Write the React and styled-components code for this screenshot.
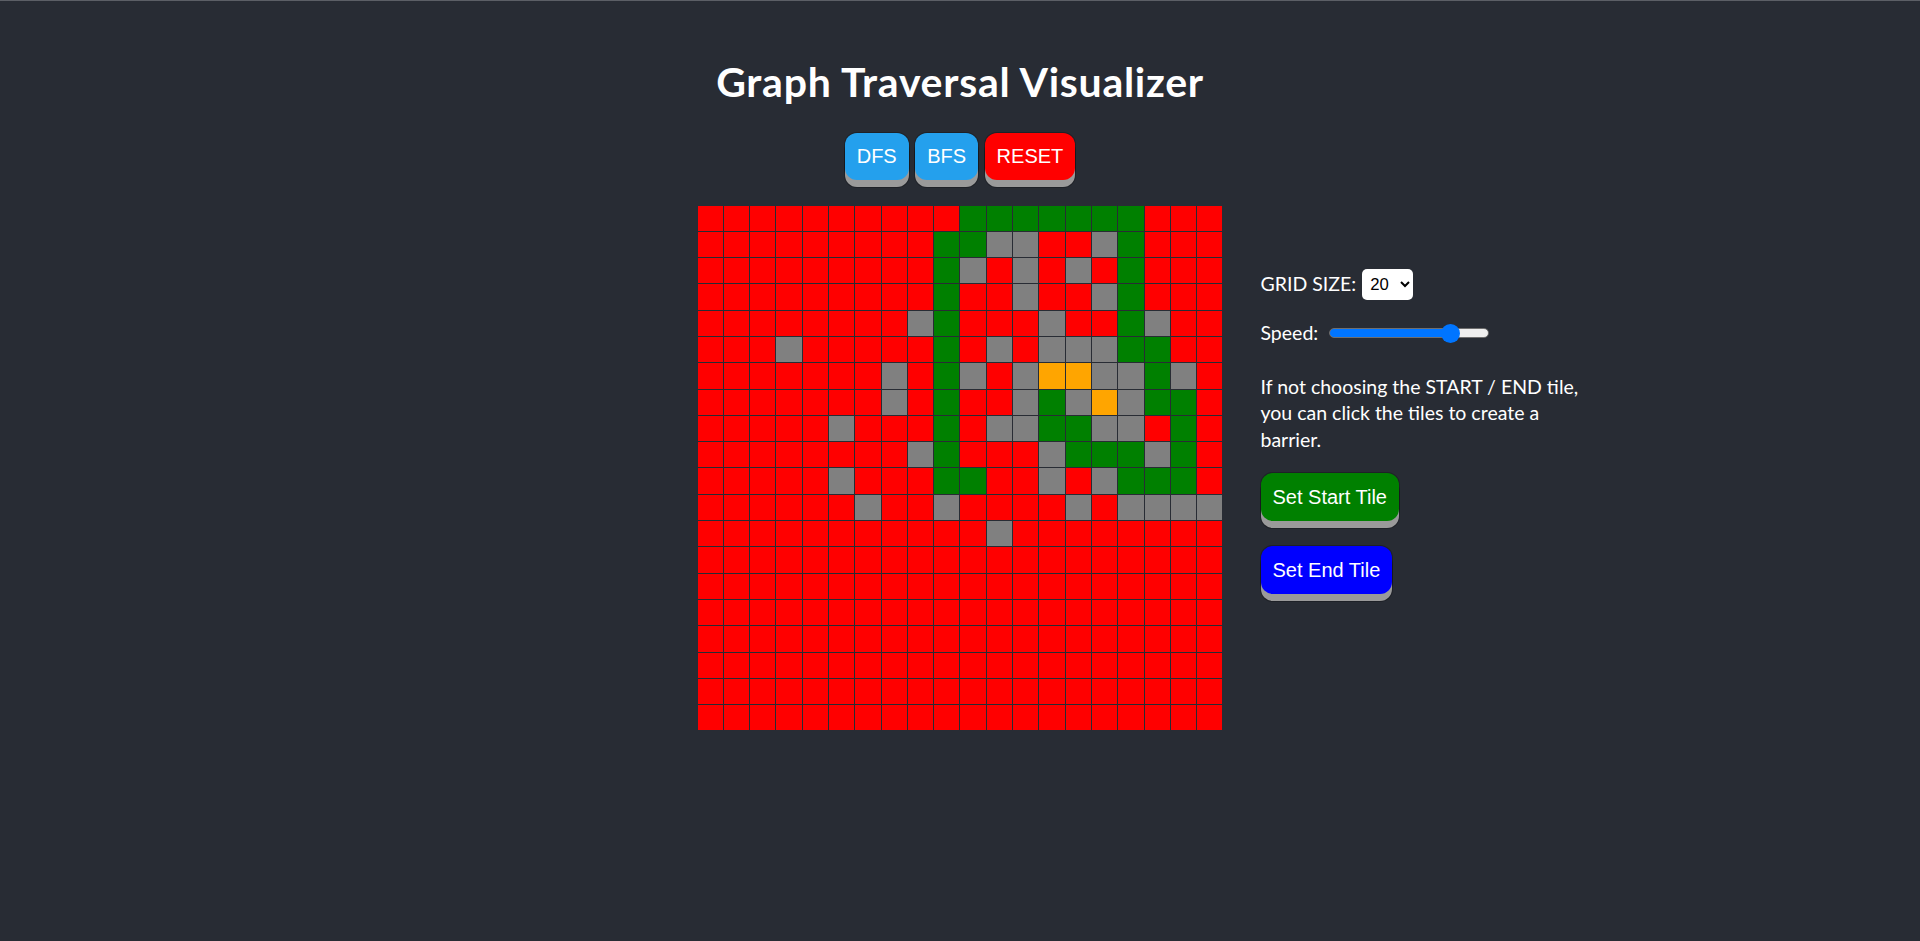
import React, { useState } from "react";
import styled, { createGlobalStyle } from "styled-components";

const GlobalStyle = createGlobalStyle`
  html, body { margin: 0; padding: 0; background: #282c34; }
  body { font-family: Lato, "Noto Sans", sans-serif; color: #ffffff; }
`;

const Page = styled.div`
  min-height: 100vh;
  box-sizing: border-box;
  border-top: 1px solid #5c5f66;
  background: #282c34;
  display: flex;
  flex-direction: column;
  align-items: stretch;
`;

const Title = styled.h1`
  margin: 53.5px 0 0;
  font-size: 41px;
  line-height: 54px;
  letter-spacing: 0.72px;
  font-weight: 700;
  text-align: center;
  color: #ffffff;
`;

const Toolbar = styled.div`
  display: flex;
  justify-content: center;
  gap: 6.5px;
  margin-top: 24.5px;
`;

const COLORS = {
  blue: "#24a0ed",
  red: "#ff0000",
  green: "#008000",
  navy: "#0000ff",
};

const Button = styled.button`
  font-family: "Liberation Sans", Arial, sans-serif;
  font-size: 20px;
  line-height: 23px;
  padding: 12px 12px;
  border: none;
  border-radius: 12px;
  color: #ffffff;
  background: ${(p) => COLORS[p.$color]};
  box-shadow: 0 7px #9a9a9a, 0 0 0 1px rgba(0, 0, 0, 0.25), 0 7px 0 1px rgba(0, 0, 0, 0.25);
  cursor: pointer;
`;

const Main = styled.div`
  display: grid;
  grid-template-columns: 1fr 525px 1fr;
  margin-top: 25.5px;
`;

const Board = styled.div`
  grid-column: 2;
  display: grid;
  grid-template-columns: repeat(20, 1fr);
  grid-auto-rows: 25.3px;
  gap: 1px;
  width: 525px;
  background: #282c34;
`;

const CELL = {
  R: "#ff0000",
  G: "#008000",
  X: "#808080",
  O: "#ffa500",
};

const Cell = styled.div`
  background: ${(p) => CELL[p.$kind]};
`;

const Panel = styled.div`
  grid-column: 3;
  display: flex;
  flex-direction: column;
  align-items: flex-start;
  padding-left: 38px;
  padding-top: 63px;
  text-align: left;
  font-size: 19.5px;
  line-height: 26.67px;
`;

const ControlRow = styled.label`
  display: flex;
  align-items: center;
  gap: ${(p) => p.$gap || 6}px;
  margin-top: ${(p) => p.$top || 0}px;
  height: ${(p) => p.$h || 26.67}px;
`;

const Select = styled.select`
  width: 51px;
  height: 31px;
  border: none;
  border-radius: 5px;
  background: #ffffff;
  color: #000000;
  font-family: "Liberation Sans", Arial, sans-serif;
  font-size: 16.7px;
  padding: 0 2px 0 4px;
`;

const Range = styled.input`
  -webkit-appearance: none;
  appearance: none;
  width: 160px;
  height: 10px;
  margin: 0;
  box-sizing: border-box;
  border-radius: 5px;
  border: 1px solid #6f6f6f;
  background: linear-gradient(
    to right,
    #0075ff 0,
    #0075ff ${(p) => p.$fill}%,
    #efefef ${(p) => p.$fill}%,
    #efefef 100%
  );
  &::-webkit-slider-thumb {
    -webkit-appearance: none;
    appearance: none;
    width: 19px;
    height: 19px;
    border-radius: 50%;
    background: #0075ff;
    border: none;
  }
`;

const Note = styled.p`
  margin: 27px 0 0;
  width: 335px;
`;

const SideButton = styled(Button)`
  margin-top: ${(p) => p.$top}px;
  height: 48px;
`;

const ROWS = [
  "RRRRRRRRRRGGGGGGGRRR",
  "RRRRRRRRRGGXXRRXGRRR",
  "RRRRRRRRRGXRXRXRGRRR",
  "RRRRRRRRRGRRXRRXGRRR",
  "RRRRRRRRXGRRRXRRGXRR",
  "RRRXRRRRRGRXRXXXGGRR",
  "RRRRRRRXRGXRXOOXXGXR",
  "RRRRRRRXRGRRXGXOXGGR",
  "RRRRRXRRRGRXXGGXXRGR",
  "RRRRRRRRXGRRRXGGGXGR",
  "RRRRRXRRRGGRRXRXGGGR",
  "RRRRRRXRRXRRRRXRXXXX",
  "RRRRRRRRRRRXRRRRRRRR",
  "RRRRRRRRRRRRRRRRRRRR",
  "RRRRRRRRRRRRRRRRRRRR",
  "RRRRRRRRRRRRRRRRRRRR",
  "RRRRRRRRRRRRRRRRRRRR",
  "RRRRRRRRRRRRRRRRRRRR",
  "RRRRRRRRRRRRRRRRRRRR",
  "RRRRRRRRRRRRRRRRRRRR",
];

export default function App() {
  const [size, setSize] = useState("20");
  const [speed, setSpeed] = useState(80);
  const thumb = 19;
  const width = 160;
  const fill = ((thumb / 2 + (speed / 100) * (width - thumb)) / width) * 100;

  return (
    <Page>
      <GlobalStyle />
      <Title>Graph Traversal Visualizer</Title>
      <Toolbar>
        <Button $color="blue">DFS</Button>
        <Button $color="blue">BFS</Button>
        <Button $color="red">RESET</Button>
      </Toolbar>
      <Main>
        <Board>
          {ROWS.map((row, r) =>
            row.split("").map((k, c) => <Cell key={`${r}-${c}`} $kind={k} />)
          )}
        </Board>
        <Panel>
          <ControlRow $h={31}>
            GRID SIZE:
            <Select value={size} onChange={(e) => setSize(e.target.value)}>
              <option value="10">10</option>
              <option value="15">15</option>
              <option value="20">20</option>
              <option value="25">25</option>
            </Select>
          </ControlRow>
          <ControlRow $top={20.5} $gap={11}>
            Speed:
            <Range
              type="range"
              min="0"
              max="100"
              value={speed}
              $fill={fill}
              onChange={(e) => setSpeed(Number(e.target.value))}
            />
          </ControlRow>
          <Note>
            If not choosing the START / END tile, you can click the tiles to
            create a barrier.
          </Note>
          <SideButton $color="green" $top={19.5}>
            Set Start Tile
          </SideButton>
          <SideButton $color="navy" $top={25}>
            Set End Tile
          </SideButton>
        </Panel>
      </Main>
    </Page>
  );
}
